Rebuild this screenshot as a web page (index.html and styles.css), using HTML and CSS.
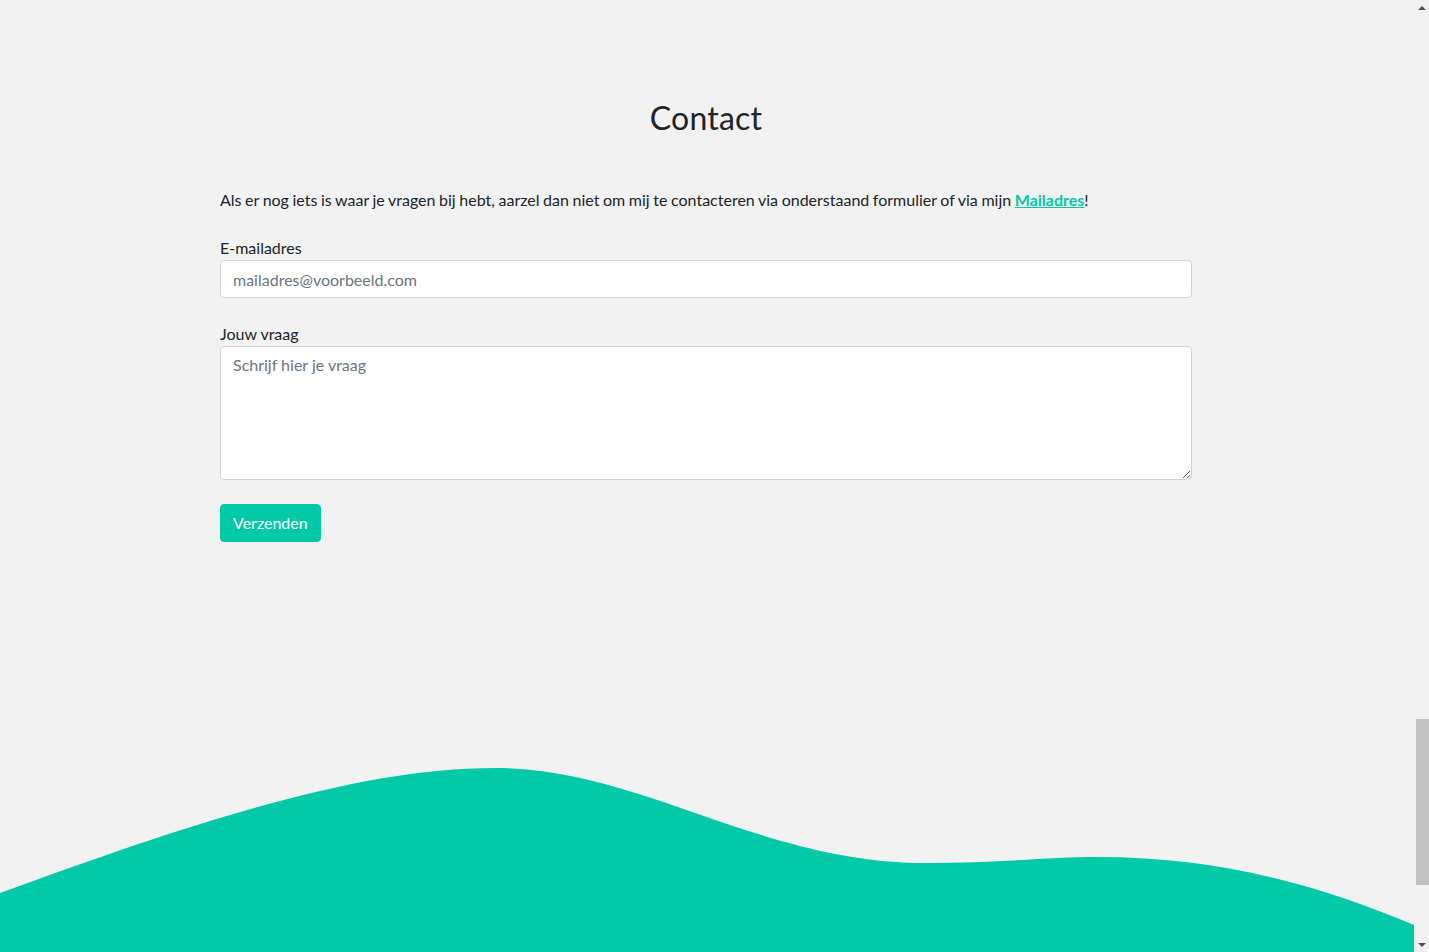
FILE: index.html
```html
<!DOCTYPE html>
<html lang="nl">
<head>
<meta charset="utf-8">
<title>Contact</title>
<link rel="stylesheet" href="styles.css">
</head>
<body>
<div class="page">
  <div class="main">
    <section class="contact">
      <h2 class="title">Contact</h2>
      <p class="intro">Als er nog iets is waar je vragen bij hebt, aarzel dan niet om mij te contacteren via onderstaand formulier of via mijn <a class="mail-link" href="#">Mailadres</a>!</p>
      <form class="form">
        <div class="field">
          <label class="label" for="email">E-mailadres</label>
          <input class="control" id="email" type="email" placeholder="mailadres@voorbeeld.com">
        </div>
        <div class="field">
          <label class="label" for="vraag">Jouw vraag</label>
          <textarea class="control textarea" id="vraag" rows="5" placeholder="Schrijf hier je vraag"></textarea>
        </div>
        <button class="btn" type="button">Verzenden</button>
      </form>
    </section>
    <div class="spacer"></div>
    <svg class="wave" viewBox="0 762 1414 190" preserveAspectRatio="none" aria-hidden="true">
      <path fill="#00c9a7" d="M0,893 C200,820 360,768 495,768 C640,768 760,863 925,863 C1000,863 1050,857 1097,857 C1230,857 1330,890 1414,925 L1414,952 L0,952 Z"/>
    </svg>
  </div>
  <div class="scrollbar" aria-hidden="true">
    <div class="arrow arrow-up"></div>
    <div class="track">
      <div class="thumb"></div>
    </div>
    <div class="arrow arrow-down"></div>
  </div>
</div>
</body>
</html>
```

FILE: styles.css
```css
* { box-sizing: border-box; }
html, body { margin: 0; padding: 0; }
body {
  background: #f2f2f2;
  font-family: Lato, "Open Sans", "Liberation Sans", sans-serif;
  font-size: 16px;
  line-height: 1.5;
  color: #212529;
  overflow: hidden;
}
.page {
  display: flex;
  height: 952px;
}
.main {
  flex: 1;
  display: flex;
  flex-direction: column;
  min-width: 0;
}
.contact {
  width: 972px;
  margin-left: calc(50% - 487px);
  padding-top: 99px;
}
.title {
  margin: 0 0 51px;
  font-size: 32px;
  font-weight: 400;
  line-height: 1.2;
  text-align: center;
  color: #212529;
  letter-spacing: 0.2px;
}
.intro {
  margin: 0 0 24px;
  word-spacing: -0.5px;
}
.mail-link {
  color: #00c9a7;
  font-weight: 700;
  text-decoration: underline;
}
.form { margin: 0; }
.field {
  margin-bottom: 24px;
}
.label {
  display: block;
  margin: 0;
}
.control {
  display: block;
  width: 100%;
  height: 38px;
  padding: 6px 12px;
  font-family: inherit;
  font-size: 16px;
  line-height: 24px;
  color: #495057;
  background: #fff;
  border: 1px solid #ced4da;
  border-radius: 4px;
  margin: 0;
}
.control::placeholder { color: #6c757d; opacity: 1; }
.textarea {
  height: 134px;
  resize: vertical;
}
.btn {
  display: inline-block;
  height: 38px;
  padding: 6px 12px;
  font-family: inherit;
  font-size: 16px;
  line-height: 24px;
  color: #fff;
  background: #00c9a7;
  border: 1px solid #00c9a7;
  border-radius: 4px;
  cursor: pointer;
}
.spacer { flex: 1; }
.wave {
  display: block;
  width: 100%;
  height: 190px;
}
.scrollbar {
  width: 15px;
  display: flex;
  flex-direction: column;
  background: #f1f1f1;
}
.arrow {
  height: 15px;
  display: flex;
  align-items: center;
  justify-content: center;
}
.arrow::before {
  content: "";
  width: 0;
  height: 0;
  border-left: 4px solid transparent;
  border-right: 4px solid transparent;
}
.arrow-up::before { border-bottom: 4px solid #505050; }
.arrow-down::before { border-top: 4px solid #505050; }
.track {
  flex: 1;
  display: flex;
  flex-direction: column;
  padding-top: 704px;
  padding-left: 2px;
}
.thumb {
  height: 166px;
  background: #c1c1c1;
}
```
